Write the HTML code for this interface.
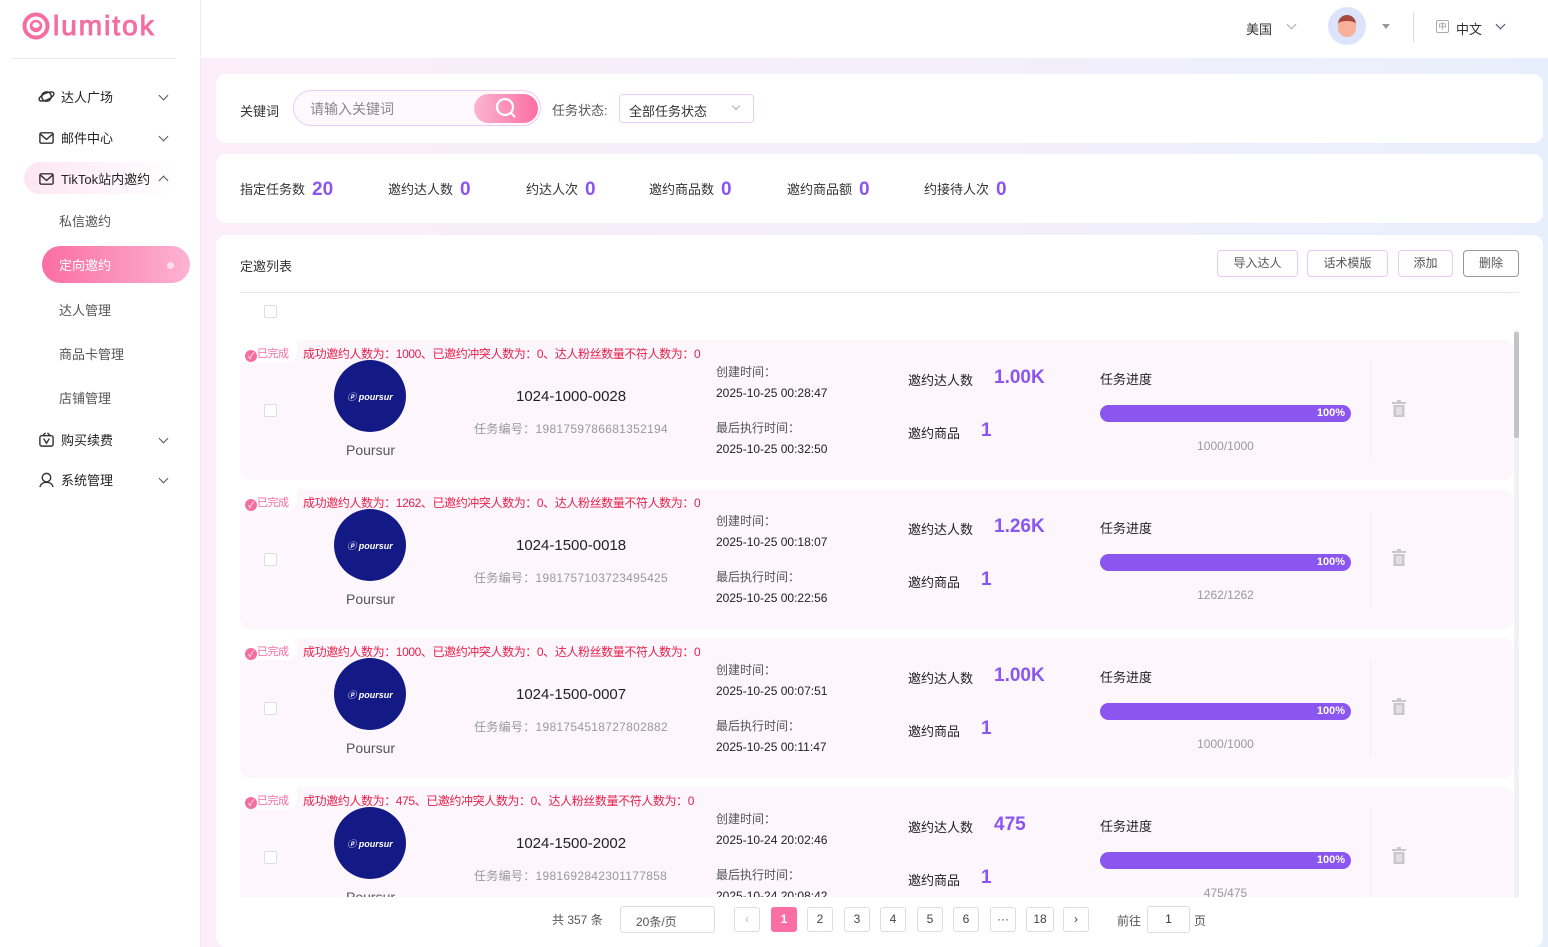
<!DOCTYPE html>
<html><head><meta charset="utf-8"><style>
*{box-sizing:border-box;margin:0;padding:0}
body{width:1548px;height:947px;overflow:hidden;font-family:"Liberation Sans","Noto Sans CJK SC",sans-serif;font-size:13px;color:#333;background:#fff;position:relative}
.abs{position:absolute}
.side{left:0;top:0;width:201px;height:947px;background:#fff;border-right:1px solid #f0ecf5}
.main{left:201px;top:58px;width:1347px;height:889px;background:linear-gradient(90deg,#fbeefa,#f3effb 60%,#e8effc)}
.card{background:#fff;border-radius:10px;position:absolute}
.nav{position:absolute;left:38px;font-size:13px;color:#222;display:flex;align-items:center;gap:6px}
.nav svg{width:17px;height:17px;fill:none;stroke:#333;stroke-width:1.5}
.chev{position:absolute;left:160px;width:7px;height:7px;border-right:1px solid #555;border-bottom:1px solid #555;transform:rotate(45deg)}
.sub{position:absolute;left:59px;font-size:13px;color:#555}
.st{position:absolute;top:179px;font-size:13px;color:#333}
.st b{color:#8b55f0;font-size:19px;margin-left:7px;vertical-align:-1px}
.btn{position:absolute;top:250px;height:27px;border:1px solid #ecc8f5;border-radius:4px;font-size:12px;color:#555;text-align:center;line-height:25px}
.row{position:absolute;left:240px;width:1273px;height:140px;background:#fdf6fd;border-radius:10px}
.pg{position:absolute;top:907px;width:26px;height:25px;border:1px solid #ddd;border-radius:3px;text-align:center;line-height:23px;font-size:12px;color:#444;background:#fff}
</style></head><body>
<div class="abs side"></div>
<div class="abs" style="left:22px;top:12px;display:flex;align-items:center">
<svg width="28" height="28" viewBox="0 0 28 28"><circle cx="14" cy="14" r="11.5" fill="none" stroke="#f46ea2" stroke-width="4"/><circle cx="14" cy="14" r="5" fill="none" stroke="#f46ea2" stroke-width="2.5"/><path d="M10 15 q4 4 8 0" stroke="#f46ea2" stroke-width="2" fill="none"/></svg>
<span style="font-size:28px;color:#f46ea2;margin-left:3px;letter-spacing:2px;line-height:28px;-webkit-text-stroke:1px #f46ea2">lumitok</span></div>
<div class="abs" style="left:12px;top:58px;width:164px;height:1px;background:#ece6f8"></div>
<div class="abs main"></div>

<div class="nav" style="top:87px"><svg viewBox="0 0 18 18"><circle cx="9" cy="9" r="5"/><ellipse cx="9" cy="9" rx="8.5" ry="3.5" transform="rotate(-25 9 9)"/></svg>达人广场</div><div class="chev" style="top:92px"></div>
<div class="nav" style="top:128px"><svg viewBox="0 0 18 18"><rect x="2" y="4" width="14" height="11" rx="1.5"/><path d="M2 5l7 6 7-6"/></svg>邮件中心</div><div class="chev" style="top:133px"></div>
<div class="abs" style="left:24px;top:162px;width:154px;height:32px;border-radius:16px;background:linear-gradient(90deg,#fde6f1,#fff)"></div>
<div class="nav" style="top:169px"><svg viewBox="0 0 18 18"><rect x="2" y="4" width="14" height="11" rx="1.5"/><path d="M2 5l7 6 7-6"/></svg>TikTok站内邀约</div><div class="chev" style="top:177px;transform:rotate(225deg)"></div>
<div class="sub" style="top:211px">私信邀约</div>
<div class="abs" style="left:42px;top:246px;width:148px;height:37px;border-radius:19px;background:linear-gradient(90deg,#fb6ea3,#fdb3d3)"></div>
<div class="sub" style="top:255px;color:#fff">定向邀约</div>
<div class="abs" style="left:167px;top:262px;width:7px;height:7px;border-radius:50%;background:#fde"></div>
<div class="sub" style="top:300px">达人管理</div>
<div class="sub" style="top:344px">商品卡管理</div>
<div class="sub" style="top:388px">店铺管理</div>
<div class="nav" style="top:430px"><svg viewBox="0 0 18 18"><rect x="2" y="5" width="14" height="11" rx="2"/><path d="M5 5l3-3M13 5l-3-3M6 8l3 5 3-5"/></svg>购买续费</div><div class="chev" style="top:435px"></div>
<div class="nav" style="top:470px"><svg viewBox="0 0 18 18"><circle cx="9" cy="7" r="4.5"/><path d="M2 17c1-4 4-5 7-5s6 1 7 5"/></svg>系统管理</div><div class="chev" style="top:475px"></div>

<div class="abs" style="left:1246px;top:19px;font-size:13px">美国</div><div class="chev" style="left:1288px;top:21px;border-color:#aaa"></div>
<div class="abs" style="left:1328px;top:7px;width:38px;height:38px;border-radius:50%;background:#dbe4fb;overflow:hidden"><div style="position:absolute;left:10px;top:8px;width:18px;height:22px;border-radius:9px;background:#f8b198;border-top:6px solid #a5483d"></div></div>
<div class="abs" style="left:1382px;top:24px;border:4px solid transparent;border-top:5px solid #999"></div>
<div class="abs" style="left:1413px;top:12px;width:1px;height:30px;background:#ddd"></div>
<div class="abs" style="left:1436px;top:20px;width:13px;height:13px;border:1px solid #aaa;border-radius:2px;font-size:8px;line-height:11px;text-align:center;color:#888">中</div>
<div class="abs" style="left:1456px;top:19px;font-size:13px">中文</div><div class="chev" style="left:1497px;top:21px;border-color:#446"></div>

<div class="card" style="left:216px;top:74px;width:1327px;height:69px"></div>
<div class="abs" style="left:240px;top:101px">关键词</div>
<div class="abs" style="left:293px;top:90px;width:248px;height:36px;border:1px solid #ebcdf6;border-radius:18px;background:#fdf9fe"></div>
<div class="abs" style="left:310px;top:99px;font-size:14px;color:#888">请输入关键词</div>
<div class="abs" style="left:474px;top:94px;width:64px;height:29px;border-radius:15px;background:linear-gradient(90deg,#fbb5d0,#fb6ea3)"><svg width="64" height="29"><circle cx="31" cy="13" r="8" fill="none" stroke="#fff" stroke-width="2.2"/><path d="M37 19l4 4" stroke="#fff" stroke-width="2.2"/></svg></div>
<div class="abs" style="left:552px;top:100px;color:#555">任务状态:</div>
<div class="abs" style="left:619px;top:94px;width:135px;height:29px;border:1px solid #ebcdf6;border-radius:4px;padding:6px 9px;color:#333">全部任务状态</div><div class="chev" style="left:733px;top:103px;border-color:#aaa;width:6px;height:6px"></div>

<div class="card" style="left:216px;top:154px;width:1327px;height:69px"></div>
<div class="st" style="left:240px">指定任务数<b>20</b></div>
<div class="st" style="left:388px">邀约达人数<b>0</b></div>
<div class="st" style="left:526px">约达人次<b>0</b></div>
<div class="st" style="left:649px">邀约商品数<b>0</b></div>
<div class="st" style="left:787px">邀约商品额<b>0</b></div>
<div class="st" style="left:924px">约接待人次<b>0</b></div>

<div class="card" style="left:216px;top:235px;width:1327px;height:712px"></div>
<div class="abs" style="left:240px;top:256px">定邀列表</div>
<div class="btn" style="left:1217px;width:81px">导入达人</div>
<div class="btn" style="left:1307px;width:81px">话术模版</div>
<div class="btn" style="left:1398px;width:55px">添加</div>
<div class="btn" style="left:1463px;width:56px;border-color:#999">删除</div>
<div class="abs" style="left:240px;top:292px;width:1279px;height:1px;background:#ece2f8"></div>
<div class="abs" style="left:264px;top:305px;width:13px;height:13px;border:1px solid #ddd;border-radius:2px"></div>
<div class="abs" style="left:1514px;top:330px;width:5px;height:568px;background:#f2f2f2"></div>
<div class="abs" style="left:1514px;top:332px;width:5px;height:106px;background:#c4c4c4;border-radius:2px"></div>

<div class="abs" style="left:216px;top:330px;width:1297px;height:567px;overflow:hidden">
<div id="rows"></div>
</div>

<script>
var d=[["1000","1024-1000-0028","1981759786681352194","2025-10-25 00:28:47","2025-10-25 00:32:50","1.00K","1000/1000"],
["1262","1024-1500-0018","1981757103723495425","2025-10-25 00:18:07","2025-10-25 00:22:56","1.26K","1262/1262"],
["1000","1024-1500-0007","1981754518727802882","2025-10-25 00:07:51","2025-10-25 00:11:47","1.00K","1000/1000"],
["475","1024-1500-2002","1981692842301177858","2025-10-24 20:02:46","2025-10-24 20:08:42","475","475/475"]];
var h="";d.forEach(function(r,i){var t=10+i*149;
h+='<div class="row" style="left:24px;top:'+t+'px"></div>';
var T=function(x,y,s,st){h+='<div class="abs" style="left:'+x+'px;top:'+(t+y)+'px;'+(st||'')+'">'+s+'</div>';};
T(24,-2,'','width:57px;height:24px;background:#fff;border-radius:0 0 10px 0');
T(29,5,'<span style="display:inline-block;width:12px;height:12px;border-radius:50%;background:#f46ea2;color:#fff;font-size:9px;line-height:12px;text-align:center;vertical-align:-2px">✓</span>已完成','font-size:11px;color:#f46ea2;letter-spacing:-0.5px');
T(87,5,'成功邀约人数为：'+r[0]+'、已邀约冲突人数为：0、达人粉丝数量不符人数为：0','font-size:12px;color:#e8214a;letter-spacing:-0.4px');
T(48,64,'','width:13px;height:13px;border:1px solid #ddd;border-radius:2px;background:#fff');
T(118,20,'<span style="font-size:9px;font-weight:bold;font-style:italic">ⓟ poursur</span>','width:72px;height:72px;border-radius:50%;background:#141a85;color:#fff;text-align:center;line-height:72px');
T(130,102,'Poursur','font-size:14px;color:#555');
T(300,48,r[1],'font-size:15px;color:#222');
T(258,80,'任务编号：'+r[2],'font-size:12px;color:#999;letter-spacing:0.3px');
T(500,23,'创建时间：','font-size:12px;color:#555');
T(500,46,r[3],'font-size:12px;color:#222');
T(500,79,'最后执行时间：','font-size:12px;color:#555');
T(500,102,r[4],'font-size:12px;color:#222');
T(692,30,'邀约达人数','font-size:13px;color:#222');
T(778,27,r[5],'font-size:19px;font-weight:bold;color:#8b55f0');
T(692,83,'邀约商品','font-size:13px;color:#222');
T(765,80,'1','font-size:19px;font-weight:bold;color:#8b55f0');
T(884,29,'任务进度','font-size:13px;color:#222');
T(884,65,'100%','width:251px;height:17px;border-radius:9px;background:#8b55f0;color:#fff;font-size:11px;font-weight:bold;text-align:right;padding-right:6px;line-height:17px');
T(884,99,r[6],'width:251px;text-align:center;font-size:12px;color:#999');
T(1154,22,'','width:1px;height:96px;background:#eee');
T(1176,60,'<svg width="14" height="17"><rect x="0" y="2" width="14" height="2" fill="#c8c8c8"/><rect x="5" y="0" width="4" height="2" fill="#c8c8c8"/><path d="M1.5 5h11v12h-11z" fill="#c8c8c8"/><path d="M5 7v8M7 7v8M9 7v8" stroke="#fdf6fd" stroke-width="1"/></svg>','');
});
document.getElementById('rows').innerHTML=h;
</script>

<div class="abs" style="left:552px;top:911px;font-size:12px;color:#555">共 357 条</div>
<div class="abs" style="left:620px;top:906px;width:95px;height:27px;border:1px solid #ddd;border-radius:3px;padding:6px 15px;font-size:12px;color:#555">20条/页</div>
<div class="pg" style="left:734px;color:#bbb">‹</div>
<div class="pg" style="left:771px;background:#fb6ea3;border-color:#fb6ea3;color:#fff;font-weight:bold">1</div>
<div class="pg" style="left:807px">2</div><div class="pg" style="left:844px">3</div><div class="pg" style="left:880px">4</div><div class="pg" style="left:917px">5</div><div class="pg" style="left:953px">6</div><div class="pg" style="left:990px">···</div><div class="pg" style="left:1026px;width:28px">18</div><div class="pg" style="left:1063px">›</div>
<div class="abs" style="left:1117px;top:912px;font-size:12px;color:#555">前往</div>
<div class="abs" style="left:1147px;top:906px;width:43px;height:27px;border:1px solid #ddd;border-radius:3px;text-align:center;line-height:25px;font-size:12px">1</div>
<div class="abs" style="left:1194px;top:912px;font-size:12px;color:#555">页</div>
</body></html>
